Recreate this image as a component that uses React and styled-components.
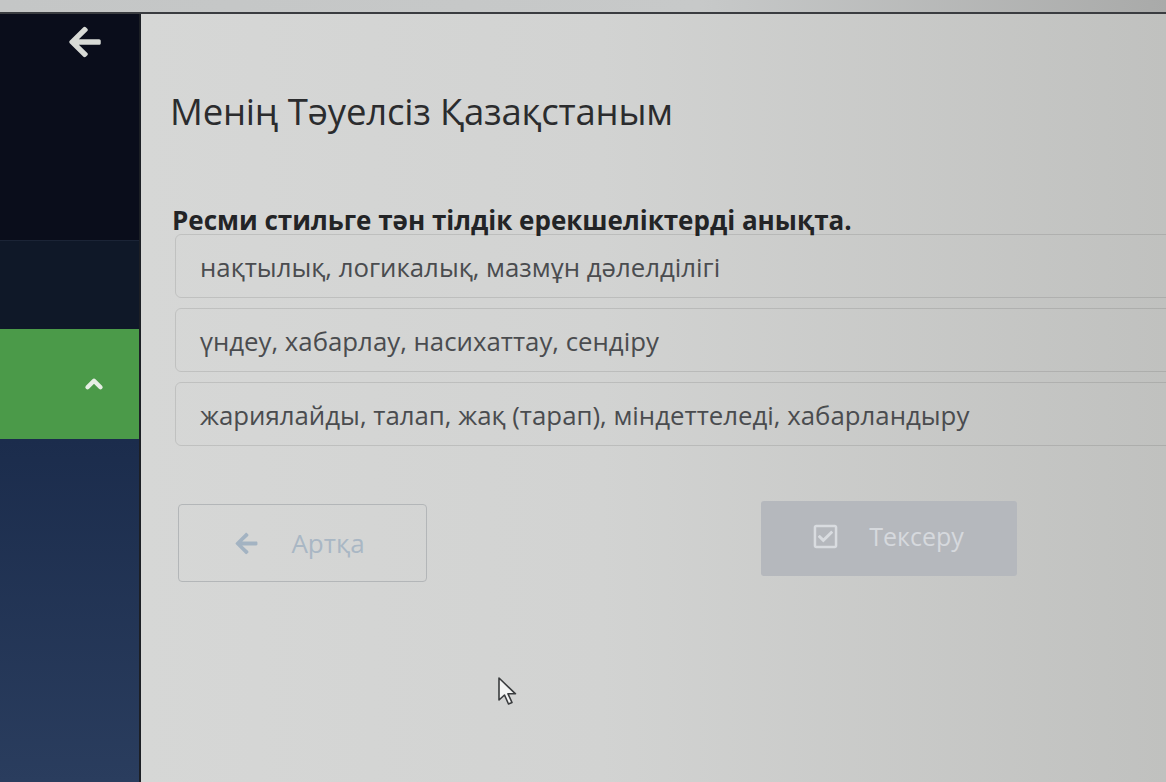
import styled, { createGlobalStyle } from "styled-components";
import { FaArrowLeft, FaRegCheckSquare } from "react-icons/fa";
import { ChevronUp } from "lucide-react";

const GlobalStyle = createGlobalStyle`
  html, body {
    margin: 0;
    padding: 0;
    height: 100%;
    overflow: hidden;
  }
  body {
    font-family: "Open Sans", "Noto Sans", sans-serif;
    background: #c8cac9;
  }
  #root {
    height: 100%;
  }
`;

const Page = styled.div`
  height: 782px;
  display: flex;
  flex-direction: column;
  background: #c9cbca;
`;

const TopStrip = styled.div`
  height: 12px;
  background: linear-gradient(to right, #c4c6c6, #c7c9c9 60%, #a9aaa9);
  border-bottom: 2px solid #3a3c40;
`;

const Body = styled.div`
  flex: 1;
  display: flex;
  min-height: 0;
`;

const Sidebar = styled.aside`
  width: 139px;
  display: flex;
  flex-direction: column;
  border-right: 2px solid #1c1f25;
`;

const SideTop = styled.div`
  box-sizing: border-box;
  height: 226px;
  background: #0a0d1b;
  display: flex;
  justify-content: flex-end;
  padding: 10px 36px 0 0;
  color: #d8dad6;
  font-size: 36px;
`;

const SideBand = styled.div`
  height: 88px;
  background: #0f1828;
  border-top: 1px solid #1b2436;
`;

const SideActive = styled.div`
  height: 110px;
  background: #4b9a49;
  display: flex;
  align-items: center;
  justify-content: flex-end;
  padding-right: 32px;
  color: #e6eee4;
`;

const SideRest = styled.div`
  flex: 1;
  background: linear-gradient(to bottom, #1b2c4c, #2a3d5e);
`;

const Main = styled.main`
  flex: 1;
  position: relative;
  overflow: hidden;
  padding: 73px 0 0 29px;
  background: linear-gradient(to right, #d6d7d6, #d2d3d2 45%, #c0c1bf);
`;

const Title = styled.h1`
  margin: 0;
  font-size: 36.5px;
  line-height: 48px;
  font-weight: 400;
  color: #2b2c2e;
  letter-spacing: -0.2px;
`;

const Question = styled.h2`
  margin: 70px 0 0 2px;
  font-size: 26px;
  line-height: 30px;
  font-weight: 700;
  color: #232426;
`;

const Options = styled.div`
  margin: -1px -20px 0 5px;
  display: flex;
  flex-direction: column;
  gap: 10px;
`;

const Option = styled.div`
  height: 64px;
  box-sizing: border-box;
  border: 1px solid rgba(0, 0, 0, 0.1);
  border-radius: 6px;
  display: flex;
  align-items: center;
  padding: 2px 0 0 24px;
  font-size: 25.8px;
  color: #4a4c4f;
`;

const Actions = styled.div`
  margin: 58px 0 0 8px;
  display: flex;
  align-items: flex-start;
`;

const BackButton = styled.button`
  width: 249px;
  height: 78px;
  box-sizing: border-box;
  border: 1px solid #b3b6b8;
  border-radius: 4px;
  background: transparent;
  display: flex;
  align-items: center;
  justify-content: center;
  gap: 32px;
  padding-right: 12px;
  font-family: inherit;
  font-size: 26px;
  color: #a9b7c4;
  svg {
    font-size: 25px;
    color: #a3b3c2;
  }
`;

const CheckButton = styled.button`
  margin: -3px 0 0 334px;
  width: 256px;
  height: 75px;
  border: none;
  border-radius: 3px;
  background: #b5b8bd;
  display: flex;
  align-items: center;
  justify-content: center;
  gap: 30px;
  padding-right: 8px;
  padding-bottom: 6px;
  font-family: inherit;
  font-size: 25px;
  color: #d6d9dd;
  svg {
    font-size: 27px;
    color: #d9dce0;
  }
`;

const Cursor = styled.svg`
  position: absolute;
  left: 356px;
  top: 662px;
  width: 22px;
  height: 32px;
`;

export default function App() {
  return (
    <Page>
      <GlobalStyle />
      <TopStrip />
      <Body>
        <Sidebar>
          <SideTop>
            <FaArrowLeft />
          </SideTop>
          <SideBand />
          <SideActive>
            <ChevronUp size={26} strokeWidth={4} />
          </SideActive>
          <SideRest />
        </Sidebar>
        <Main>
          <Title>Менің Тәуелсіз Қазақстаным</Title>
          <Question>Ресми стильге тән тілдік ерекшеліктерді анықта.</Question>
          <Options>
            <Option>нақтылық, логикалық, мазмұн дәлелділігі</Option>
            <Option>үндеу, хабарлау, насихаттау, сендіру</Option>
            <Option>жариялайды, талап, жақ (тарап), міндеттеледі, хабарландыру</Option>
          </Options>
          <Actions>
            <BackButton>
              <FaArrowLeft />
              Артқа
            </BackButton>
            <CheckButton>
              <FaRegCheckSquare />
              Тексеру
            </CheckButton>
          </Actions>
          <Cursor viewBox="0 0 22 32">
            <path
              d="M2 2 L2 24 L7.5 19 L11.5 28 L15 26.5 L11 17.8 L18.5 17.8 Z"
              fill="#f4f5f4"
              stroke="#3a3c3e"
              strokeWidth="1.6"
              strokeLinejoin="round"
            />
          </Cursor>
        </Main>
      </Body>
    </Page>
  );
}
